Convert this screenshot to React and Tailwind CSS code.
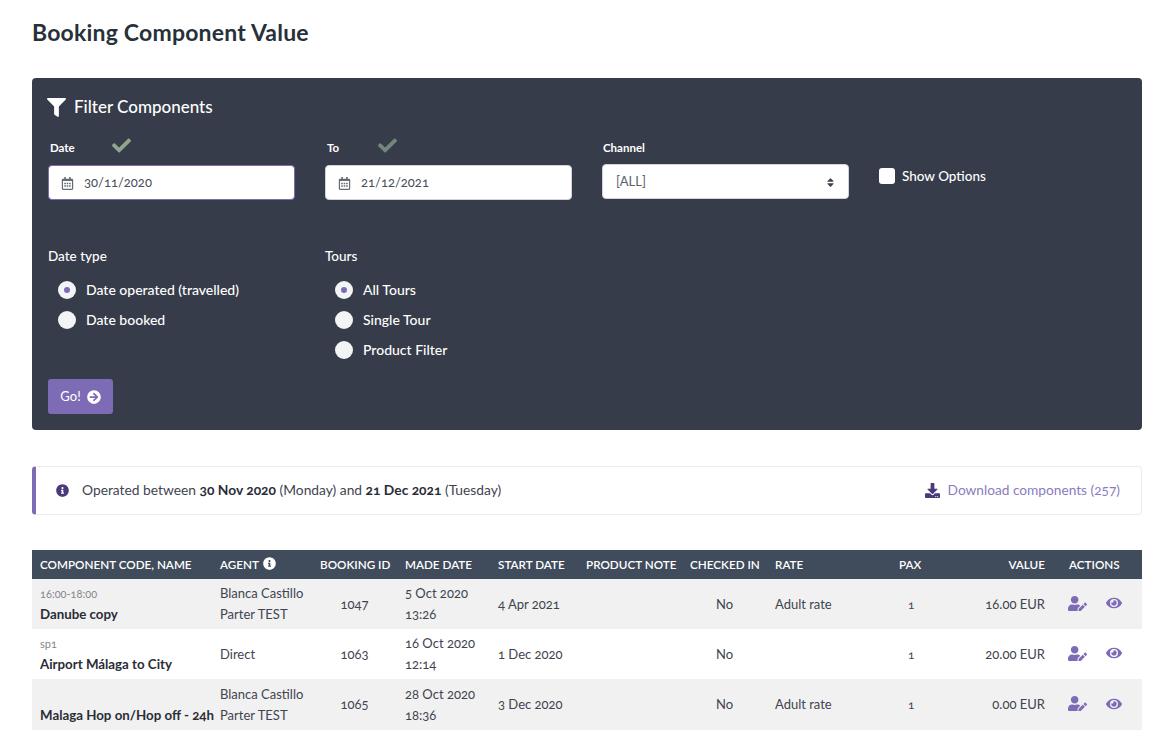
import { FaFilter, FaCheck, FaRegCalendarAlt, FaInfoCircle, FaDownload, FaUserEdit, FaEye, FaArrowCircleRight, FaSort } from 'react-icons/fa'

const rows = [
  { code: '16:00-18:00', name: 'Danube copy', agent: ['Blanca Castillo', 'Parter TEST'], id: '1047', made: ['5 Oct 2020', '13:26'], start: '4 Apr 2021', rate: 'Adult rate', value: '16.00 EUR', shade: true },
  { code: 'sp1', name: 'Airport Málaga to City', agent: ['Direct'], id: '1063', made: ['16 Oct 2020', '12:14'], start: '1 Dec 2020', rate: '', value: '20.00 EUR' },
  { code: '', name: 'Malaga Hop on/Hop off - 24h', agent: ['Blanca Castillo', 'Parter TEST'], id: '1065', made: ['28 Oct 2020', '18:36'], start: '3 Dec 2020', rate: 'Adult rate', value: '0.00 EUR', shade: true, tall: true },
]

function DateField({ label, value, checkClass, labelWidth, focused }) {
  return (
    <div>
      <div className="flex h-[26px] items-center">
        <span className={`${labelWidth} pl-[2px] text-[11.5px] font-bold text-white`}>{label}</span>
        <FaCheck className={`mb-[5px] text-[19px] ${checkClass}`} />
      </div>
      <div className={`mt-[4px] flex h-[35px] items-center rounded-[4px] border bg-white pt-[1px] pl-[12px] text-[13px] text-[#4a4f5c] ${focused ? 'border-[#7d6bb3]' : 'border-[#cfd3da]'}`}>
        <FaRegCalendarAlt className="mr-[10px] text-[13px] text-[#666b73]" />
        {value}
      </div>
    </div>
  )
}

function Radio({ label, checked }) {
  return (
    <div className="flex h-[30px] items-center gap-[10px] pl-[10px] text-[14px] font-medium text-white">
      <span className="flex h-[18px] w-[18px] items-center justify-center rounded-full bg-[#f3f4f6]">
        {checked && <span className="h-[6px] w-[6px] rounded-full bg-[#7e6bb5]" />}
      </span>
      <span className="mb-[1px]">{label}</span>
    </div>
  )
}

export default function App() {
  return (
    <div className="ml-8 w-[1110px] pt-[19px] font-['Lato',sans-serif] text-[#3f4450] oldstyle-nums">
      <h1 className="text-[23px] leading-[26px] font-bold tracking-[0.2px] text-[#283039]">Booking Component Value</h1>

      <section className="mt-[33px] h-[352px] rounded-[4px] bg-[#363c49] px-4 pt-[17px]">
        <div className="flex h-[24px] items-center gap-[8px] text-white">
          <FaFilter className="-ml-[1px] text-[19px]" />
          <span className="text-[17px] font-medium">Filter Components</span>
        </div>

        <div className="mt-[16px] grid grid-cols-[247px_247px_247px_1fr] gap-x-[30px]">
          <DateField label="Date" value="30/11/2020" checkClass="text-[#8fa58f]" labelWidth="w-[64px]" focused />
          <DateField label="To" value="21/12/2021" checkClass="text-[#73867a]" labelWidth="w-[53px]" />
          <div>
            <div className="flex h-[26px] items-center pl-[1px] text-[11.5px] font-bold text-white">Channel</div>
            <div className="mt-[3px] flex h-[35px] items-center justify-between rounded-[4px] border border-[#cfd3da] bg-white pt-[1px] pr-[12px] pl-[13px] text-[13px] text-[#5a5f6b]">
              [ALL]
              <FaSort className="text-[11px] text-[#3c4149]" />
            </div>
          </div>
          <div className="flex h-[16px] translate-y-[33px] items-center gap-[7px]">
            <span className="h-[16px] w-[16px] rounded-[3px] bg-white" />
            <span className="text-[13.5px] font-medium text-white">Show Options</span>
          </div>
        </div>

        <div className="mt-[46px] grid grid-cols-[247px_1fr] gap-x-[30px]">
          <div>
            <div className="text-[13.5px] leading-[20px] font-medium text-white">Date type</div>
            <div className="mt-[9px]">
              <Radio label="Date operated (travelled)" checked />
              <Radio label="Date booked" />
            </div>
          </div>
          <div>
            <div className="text-[13.5px] leading-[20px] font-medium text-white">Tours</div>
            <div className="mt-[9px]">
              <Radio label="All Tours" checked />
              <Radio label="Single Tour" />
              <Radio label="Product Filter" />
            </div>
          </div>
        </div>

        <button type="button" className="mt-[14px] flex h-[35px] w-[65px] items-center justify-center gap-[6px] rounded-[3px] bg-[#7e6bb5] text-[13px] text-white">
          Go! <FaArrowCircleRight className="text-[14px]" />
        </button>
      </section>

      <div className="mt-[36px] flex h-[49px] items-center justify-between rounded-[4px] border border-l-[4px] border-[#ececee] border-l-[#7e6bb5] bg-white pr-[21px] pl-[20px] text-[13.8px]">
        <div className="flex items-center gap-[13px]">
          <FaInfoCircle className="text-[13px] text-[#4a3a7c]" />
          <span>
            Operated between <b className="text-[#2a2d36]">30 Nov 2020</b> (Monday) and <b className="text-[#2a2d36]">21 Dec 2021</b> (Tuesday)
          </span>
        </div>
        <div className="flex items-center gap-[8px] text-[13.7px] text-[#8a7cc0]">
          <FaDownload className="text-[15px] text-[#4a3a7c]" />
          Download components (257)
        </div>
      </div>

      <table className="mt-[35px] w-full table-fixed border-collapse text-[13px]">
        <colgroup>
          <col className="w-[180px]" />
          <col className="w-[100px]" />
          <col className="w-[85px]" />
          <col className="w-[93px]" />
          <col className="w-[88px]" />
          <col className="w-[104px]" />
          <col className="w-[85px]" />
          <col className="w-[124px]" />
          <col className="w-[47px]" />
          <col className="w-[115px]" />
          <col className="w-[89px]" />
        </colgroup>
        <thead>
          <tr className="h-[29px] bg-[#404c5b] text-[11.7px] whitespace-nowrap text-white">
            <th className="px-2 text-left font-semibold">COMPONENT CODE, NAME</th>
            <th className="px-2 text-left font-semibold">
              <span className="inline-flex items-center gap-[4px]">AGENT <FaInfoCircle className="mb-[2px] text-[13px]" /></span>
            </th>
            <th className="px-2 text-left font-semibold">BOOKING ID</th>
            <th className="px-2 text-left font-semibold">MADE DATE</th>
            <th className="px-2 text-left font-semibold">START DATE</th>
            <th className="px-2 text-left font-semibold">PRODUCT NOTE</th>
            <th className="px-2 text-left font-semibold">CHECKED IN</th>
            <th className="px-2 text-left font-semibold">RATE</th>
            <th className="px-2 text-left font-semibold">PAX</th>
            <th className="px-2 text-right font-semibold">VALUE</th>
            <th className="px-2 text-left font-semibold"><span className="pl-[8px]">ACTIONS</span></th>
          </tr>
        </thead>
        <tbody>
          {rows.map(r => (
            <tr key={r.id} className={`leading-[21px] ${r.tall ? 'h-[51px]' : 'h-[50px]'} ${r.shade ? 'bg-[#f1f1f1]' : 'bg-white'}`}>
              <td className="px-2 whitespace-nowrap">
                {r.code ? <div className="text-[11px] text-[#85868c]">{r.code}</div> : <div className="h-[21px]" />}
                <div className="text-[13.3px] font-bold text-[#2a2d36]">{r.name}</div>
              </td>
              <td className="px-2 whitespace-nowrap">{r.agent.map(a => <div key={a}>{a}</div>)}</td>
              <td className="px-2 text-center">{r.id}</td>
              <td className="px-2 whitespace-nowrap">{r.made.map(m => <div key={m}>{m}</div>)}</td>
              <td className="px-2 whitespace-nowrap">{r.start}</td>
              <td className="px-2" />
              <td className="px-2 text-center">No</td>
              <td className="px-2">{r.rate}</td>
              <td className="px-2 text-[12px]"><span className="pl-[9px]">1</span></td>
              <td className="px-2 text-right whitespace-nowrap">{r.value}</td>
              <td className="px-2">
                <div className="mb-[2px] flex items-center gap-[19px] pl-[7px] text-[#7e6bb5]">
                  <FaUserEdit className="text-[19px]" />
                  <FaEye className="text-[16px]" />
                </div>
              </td>
            </tr>
          ))}
        </tbody>
      </table>
    </div>
  )
}
